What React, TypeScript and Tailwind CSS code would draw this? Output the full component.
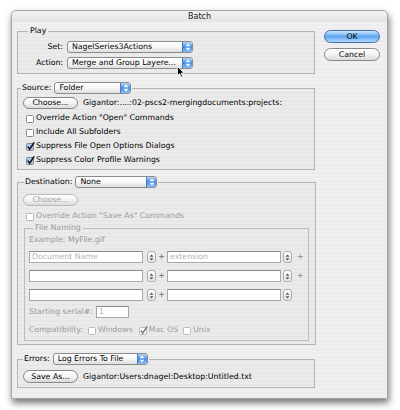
import React from "react";

type Kids = { children?: React.ReactNode };

function UpDown({ color = "#ffffff" }: { color?: string }) {
  return (
    <svg width="6" height="8" viewBox="0 0 6 8" className="shrink-0">
      <path d="M3 0.6 L5.4 3.3 H0.6 Z" fill={color} />
      <path d="M3 7.4 L5.4 4.7 H0.6 Z" fill={color} />
    </svg>
  );
}

function Popup({ text, className }: { text: string; className: string }) {
  return (
    <div
      className={`flex h-[12px] items-stretch overflow-hidden rounded-[3px] border border-[#8c8c8c] bg-gradient-to-b from-white via-[#f7f7f7] to-[#dedede] ${className}`}
    >
      <span className="flex flex-1 items-center whitespace-nowrap pl-[4px] leading-[10px] text-black">
        {text}
      </span>
      <span className="flex w-[10px] items-center justify-center border-l border-[#4a78b5] bg-gradient-to-b from-[#b3d6f8] via-[#3f8ce6] to-[#8cc2f5]">
        <UpDown />
      </span>
    </div>
  );
}

function Pill({
  children,
  className = "",
  disabled = false,
}: Kids & { className?: string; disabled?: boolean }) {
  return (
    <div
      className={`flex h-[12px] shrink-0 items-center justify-center rounded-full border bg-gradient-to-b from-white via-[#f3f3f3] to-[#dadada] leading-[10px] ${
        disabled ? "border-[#bababa] text-[#a0a0a0]" : "border-[#888888] text-black"
      } ${className}`}
    >
      {children}
    </div>
  );
}

function Box({ checked = false, disabled = false }: { checked?: boolean; disabled?: boolean }) {
  return (
    <svg width="9" height="9" viewBox="0 0 9 9" className="shrink-0 overflow-visible">
      <rect
        x="0.5"
        y="1.5"
        width="7"
        height="7"
        rx="1"
        fill={checked && !disabled ? "#a8caef" : "#ffffff"}
        stroke={disabled ? "#b8b8b8" : "#8a8a8a"}
      />
      {checked && (
        <path
          d="M1.8 4.6 L3.7 7.2 L8.2 0.4"
          fill="none"
          stroke={disabled ? "#7a7a7a" : "#111111"}
          strokeWidth="1.6"
        />
      )}
    </svg>
  );
}

function CheckRow({
  label,
  checked = false,
  disabled = false,
  className = "",
}: {
  label: string;
  checked?: boolean;
  disabled?: boolean;
  className?: string;
}) {
  return (
    <div className={`flex items-center gap-[1px] ${disabled ? "text-[#9c9c9c]" : "text-black"} ${className}`}>
      <Box checked={checked} disabled={disabled} />
      <span>{label}</span>
    </div>
  );
}

function Stepper() {
  return (
    <div className="flex h-[12px] w-[9px] shrink-0 items-center justify-center rounded-[3px] border border-[#acacac] bg-gradient-to-b from-white to-[#e6e6e6]">
      <svg width="5" height="7" viewBox="0 0 5 7">
        <path d="M2.5 0.5 L4.5 2.8 H0.5 Z" fill="#555555" />
        <path d="M2.5 6.5 L4.5 4.2 H0.5 Z" fill="#555555" />
      </svg>
    </div>
  );
}

function Field({ placeholder = "", className = "" }: { placeholder?: string; className?: string }) {
  return (
    <div
      className={`flex h-[12px] shrink-0 items-center border border-[#a8a8a8] border-t-[#8a8a8a] bg-white pl-[2px] leading-[10px] text-[#b4b4b4] ${className}`}
    >
      {placeholder}
    </div>
  );
}

function NameRow({ first, second, plus }: { first?: string; second?: string; plus: boolean }) {
  return (
    <div className="flex items-center">
      <Field placeholder={first} className="w-[114px]" />
      <div className="ml-[4px]">
        <Stepper />
      </div>
      <span className="w-[11px] text-center text-[#6a6a6a]">+</span>
      <Field placeholder={second} className="w-[114px]" />
      <div className="ml-[2px]">
        <Stepper />
      </div>
      {plus && <span className="ml-[5px] text-[#8a8a8a]">+</span>}
    </div>
  );
}

export default function App() {
  return (
    <div className="relative h-[410px] w-[400px] overflow-hidden bg-white pl-[11px] pt-[10px] font-['DejaVu_Sans',sans-serif] text-[7.8px] leading-[12px] text-black">
      <div className="flex h-[389px] w-[377px] flex-col rounded-t-[5px] border border-[#a6a6a6] bg-[repeating-linear-gradient(0deg,#ececec_0px,#ececec_2px,#f0f0f0_2px,#f0f0f0_4px)] shadow-[1px_4px_7px_rgba(0,0,0,0.55)]">
        {/* title bar */}
        <div className="flex h-[11px] shrink-0 items-center justify-center rounded-t-[5px] bg-gradient-to-b from-[#f2f2f2] to-[#e4e4e4] text-[8px] leading-[11px] text-[#1a1a1a]">
          Batch
        </div>

        <div className="flex gap-[9px] pl-[5px] pt-[3px]">
          {/* settings column */}
          <div className="flex w-[298px] flex-col">
            <fieldset className="border border-[#b4b4b4] bg-black/[0.02]">
              <legend className="ml-[10px] h-[12px] px-[2px] leading-[12px]">Play</legend>
              <div className="flex flex-col gap-[4px] pb-[4px] pt-[4px]">
                <div className="flex items-center">
                  <span className="w-[45px] text-right">Set:</span>
                  <Popup text="NagelSeries3Actions" className="ml-[4px] w-[126px]" />
                </div>
                <div className="flex items-center">
                  <span className="w-[45px] text-right">Action:</span>
                  <Popup text="Merge and Group Layere..." className="ml-[4px] w-[126px]" />
                </div>
              </div>
            </fieldset>

            <fieldset className="mt-[8px] border border-[#b4b4b4] bg-black/[0.02]">
              <legend className="ml-[3px] h-[12px] px-[1px]">
                <div className="flex h-[12px] items-center gap-[3px]">
                  <span>Source:</span>
                  <Popup text="Folder" className="w-[77px]" />
                </div>
              </legend>
              <div className="flex flex-col px-[5px] pb-[2px] pt-[3px]">
                <div className="flex h-[12px] items-center gap-[5px]">
                  <Pill className="w-[55px]">Choose...</Pill>
                  <span className="whitespace-nowrap">Gigantor:....:02-pscs2-mergingdocuments:projects:</span>
                </div>
                <div className="ml-[3px] mt-[2px] flex flex-col">
                  <CheckRow label={'Override Action "Open" Commands'} className="h-[14px]" />
                  <CheckRow label="Include All Subfolders" className="h-[14px]" />
                  <CheckRow label="Suppress File Open Options Dialogs" checked className="h-[14px]" />
                  <CheckRow label="Suppress Color Profile Warnings" checked className="h-[14px]" />
                </div>
              </div>
            </fieldset>

            <fieldset className="mt-[6px] border border-[#b4b4b4] bg-black/[0.02]">
              <legend className="ml-[6px] h-[12px] px-[1px]">
                <div className="flex h-[12px] items-center gap-[3px]">
                  <span>Destination:</span>
                  <Popup text="None" className="w-[82px]" />
                </div>
              </legend>
              <div className="flex flex-col pb-[3px] pt-[6px]">
                <div className="px-[5px]">
                  <Pill disabled className="w-[55px]">
                    Choose...
                  </Pill>
                </div>
                <CheckRow
                  label={'Override Action "Save As" Commands'}
                  disabled
                  className="ml-[8px] mt-[4px] h-[12px]"
                />
                <fieldset className="mx-[6px] border border-[#bdbdbd] text-[#9a9a9a]">
                  <legend className="ml-[8px] h-[12px] px-[2px] leading-[12px]">File Naming</legend>
                  <div className="flex flex-col px-[4px] pb-[4px]">
                    <div className="h-[12px]">Example: MyFile.gif</div>
                    <div className="mt-[5px]">
                      <NameRow first="Document Name" second="extension" plus />
                    </div>
                    <div className="mt-[7px]">
                      <NameRow plus />
                    </div>
                    <div className="mt-[7px]">
                      <NameRow plus={false} />
                    </div>
                    <div className="mt-[5px] flex h-[12px] items-center">
                      <span>Starting serial#:</span>
                      <Field placeholder="1" className="ml-[3px] w-[33px] text-[#a0a0a0]" />
                    </div>
                    <div className="mt-[6px] flex h-[12px] items-center">
                      <span>Compatibility:</span>
                      <CheckRow label="Windows" disabled className="ml-[5px]" />
                      <CheckRow label="Mac OS" disabled checked className="ml-[6px]" />
                      <CheckRow label="Unix" disabled className="ml-[5px]" />
                    </div>
                  </div>
                </fieldset>
              </div>
            </fieldset>

            <fieldset className="mt-[8px] border border-[#b4b4b4] bg-black/[0.02]">
              <legend className="ml-[5px] h-[12px] px-[1px]">
                <div className="flex h-[12px] items-center gap-[3px]">
                  <span>Errors:</span>
                  <Popup text="Log Errors To File" className="w-[95px]" />
                </div>
              </legend>
              <div className="flex items-center gap-[5px] px-[5px] pb-[4px] pt-[5px]">
                <Pill className="h-[13px] w-[55px]">Save As...</Pill>
                <span className="whitespace-nowrap">Gigantor:Users:dnagel:Desktop:Untitled.txt</span>
              </div>
            </fieldset>
          </div>

          {/* dialog buttons */}
          <div className="flex w-[56px] flex-col gap-[5px] pt-[5px]">
            <div className="flex h-[13px] items-center justify-center rounded-full border border-[#3f6ead] bg-gradient-to-b from-[#d3e8fc] via-[#5ba4ef] to-[#b3dafc] leading-[10px] text-black">
              OK
            </div>
            <Pill className="h-[13px]">Cancel</Pill>
          </div>
        </div>
      </div>

      {/* mouse pointer resting on the Action popup */}
      <svg
        width="8"
        height="12"
        viewBox="0 0 8 12"
        className="absolute left-[177px] top-[66px]"
      >
        <path
          d="M0.5 0.5 L0.5 9.5 L2.6 7.6 L4.2 11.2 L5.6 10.6 L4.1 7.1 L7 7.1 Z"
          fill="#000000"
          stroke="#ffffff"
          strokeWidth="0.8"
          strokeLinejoin="round"
        />
      </svg>
    </div>
  );
}
